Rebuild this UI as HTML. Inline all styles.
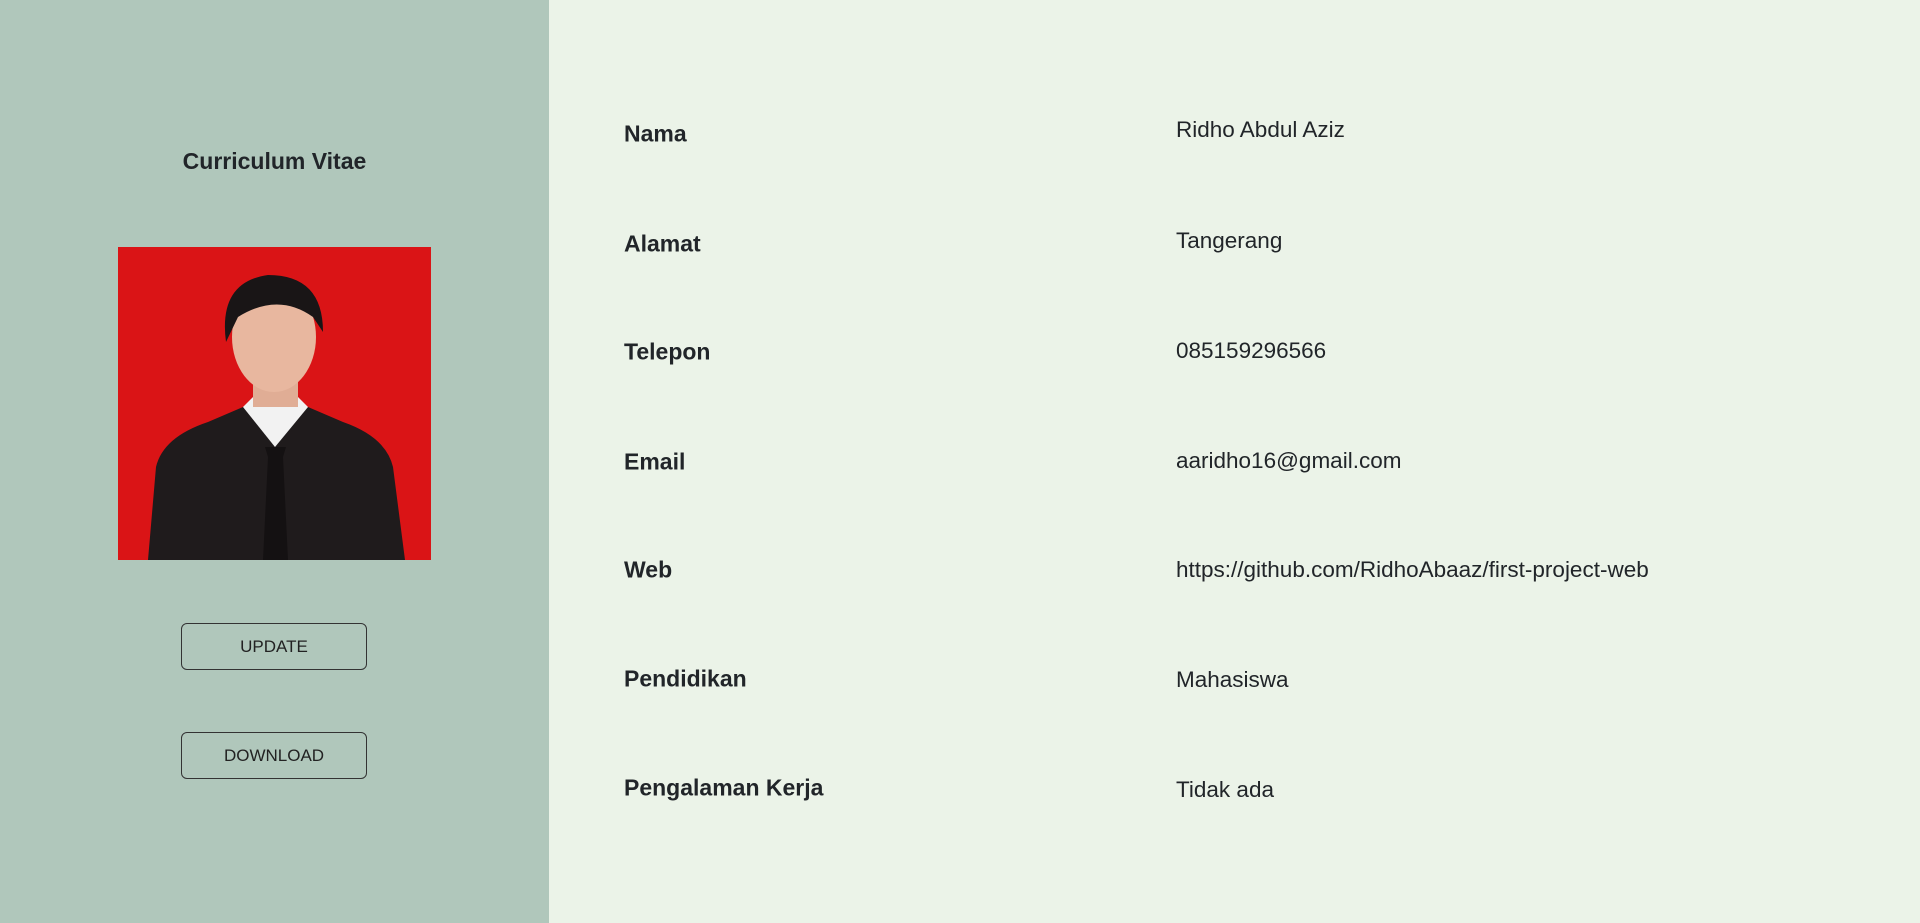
<!DOCTYPE html>
<html><head><meta charset="utf-8"><style>
html,body{margin:0;padding:0;width:1920px;height:923px;overflow:hidden;font-family:"Liberation Sans",sans-serif;color:#212529}
.side{position:absolute;left:0;top:0;width:549px;height:923px;background:#b0c7bb}
.main{position:absolute;left:549px;top:0;width:1371px;height:923px;background:#ebf3e8}
.title{position:absolute;left:0;width:549px;top:148px;text-align:center;font-size:23px;font-weight:bold}
.photo{position:absolute;left:118px;top:247px;width:313px;height:313px}
.btn{position:absolute;left:181px;width:184px;height:45px;border:1px solid #333;border-radius:6px;text-align:center;line-height:45px;font-size:17px;color:#222}
.lab{position:absolute;left:624px;font-size:23px;font-weight:bold;transform:translateY(-50%)}
.val{position:absolute;left:1176px;font-size:22.5px;transform:translateY(-50%)}
</style></head><body>
<div class="side">
<div class="title">Curriculum Vitae</div>
<svg class="photo" viewBox="0 0 313 313">
<rect width="313" height="313" fill="#da1416"/>
<path d="M30 313 L38 220 Q45 190 90 175 L125 160 L190 160 L225 175 Q268 190 275 220 L287 313Z" fill="#1f1b1c"/>
<path d="M125 160 L157 200 L190 160 L180 150 L135 150Z" fill="#f2f2f2"/>
<path d="M150 210 L145 313 L170 313 L165 210 L168 200 L147 200Z" fill="#141112"/>
<rect x="135" y="110" width="45" height="50" fill="#e0ad95"/>
<ellipse cx="156" cy="90" rx="42" ry="55" fill="#e8b79f"/>
<path d="M108 95 Q100 35 150 28 Q205 28 205 85 L195 70 Q160 45 120 70Z" fill="#191516"/>
</svg>
<div class="btn" style="top:623px">UPDATE</div>
<div class="btn" style="top:732px">DOWNLOAD</div>
</div>
<div class="main"></div>
<div class="lab" style="top:134px">Nama</div>
<div class="lab" style="top:244px">Alamat</div>
<div class="lab" style="top:352px">Telepon</div>
<div class="lab" style="top:462px">Email</div>
<div class="lab" style="top:570px">Web</div>
<div class="lab" style="top:679px">Pendidikan</div>
<div class="lab" style="top:788px">Pengalaman Kerja</div>
<div class="val" style="top:130px">Ridho Abdul Aziz</div>
<div class="val" style="top:241px">Tangerang</div>
<div class="val" style="top:351px">085159296566</div>
<div class="val" style="top:461px">aaridho16@gmail.com</div>
<div class="val" style="top:570px">https://github.com/RidhoAbaaz/first-project-web</div>
<div class="val" style="top:680px">Mahasiswa</div>
<div class="val" style="top:790px">Tidak ada</div>
</body></html>
